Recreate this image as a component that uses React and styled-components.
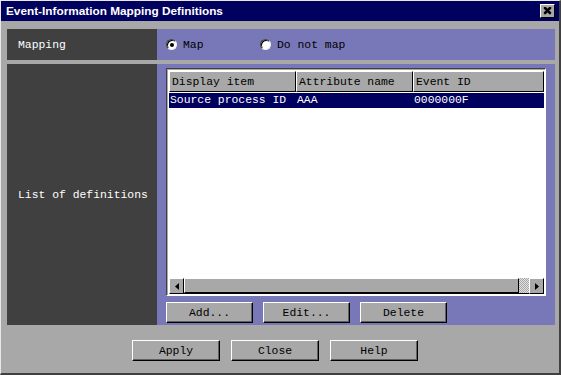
import React, { useState } from 'react';
import styled, { createGlobalStyle } from 'styled-components';

const GlobalStyle = createGlobalStyle`
  html, body { margin: 0; padding: 0; background: #a8a8a8; }
  * { box-sizing: border-box; }
`;

const mono = `"Liberation Mono", "DejaVu Sans Mono", monospace`;

const Window = styled.div`
  width: 561px;
  height: 375px;
  background: #a8a8a8;
  border-left: 1px solid #e8e8e8;
  border-top: 1px solid #e8e8e8;
  border-right: 2px solid #404040;
  border-bottom: 2px solid #404040;
  display: flex;
  flex-direction: column;
  font-family: ${mono};
  font-size: 11.4px;
  overflow: hidden;
`;

const TitleBar = styled.div`
  height: 20px;
  background: #00005e;
  color: #fff;
  display: flex;
  align-items: center;
  justify-content: space-between;
  padding: 0 4px 0 5px;
  font-family: "Liberation Sans", Arial, sans-serif;
  font-weight: bold;
  font-size: 11.8px;
`;

const CloseBox = styled.div`
  width: 15px;
  height: 14px;
  background: #a8a8a8;
  border-top: 1px solid #fff;
  border-left: 1px solid #fff;
  border-right: 1px solid #000;
  border-bottom: 1px solid #000;
  display: flex;
  align-items: center;
  justify-content: center;
`;

const Content = styled.div`
  flex: 1;
  display: flex;
  flex-direction: column;
  gap: 4px;
  padding: 8px 4px 0 6px;
`;

const Row = styled.div`
  display: flex;
  height: ${({ $h }) => $h}px;
`;

const Label = styled.div`
  width: 150px;
  background: #404040;
  color: #fff;
  display: flex;
  align-items: center;
  padding-left: 11px;
`;

const Field = styled.div`
  flex: 1;
  background: #7878b8;
  display: flex;
  flex-direction: ${({ $col }) => ($col ? 'column' : 'row')};
  align-items: ${({ $col }) => ($col ? 'stretch' : 'center')};
  padding: ${({ $col }) => ($col ? '4px 8px 0 9px' : '0 0 0 9px')};
  gap: ${({ $col }) => ($col ? '6px' : '0')};
`;

const RadioOption = styled.label`
  display: flex;
  align-items: center;
  gap: 6px;
  color: #000;
  width: ${({ $w }) => $w}px;
  cursor: default;
`;

const RadioDot = styled.span`
  width: 11px;
  height: 11px;
  border-radius: 50%;
  background: #fff;
  border-top: 1px solid #404040;
  border-left: 1px solid #404040;
  border-right: 1px solid #f0f0f0;
  border-bottom: 1px solid #f0f0f0;
  box-shadow: inset 1px 1px 0 #000;
  display: flex;
  align-items: center;
  justify-content: center;

  &::after {
    content: '';
    width: 4px;
    height: 4px;
    border-radius: 50%;
    background: ${({ $on }) => ($on ? '#000' : 'transparent')};
  }
`;

const ListBox = styled.div`
  height: 228px;
  background: #fff;
  border-top: 1px solid #404040;
  border-left: 1px solid #404040;
  border-right: 1px solid #fff;
  border-bottom: 1px solid #fff;
  box-shadow: inset 1px 1px 0 #a8a8a8;
  padding: 2px 1px 1px 2px;
  display: flex;
  flex-direction: column;
  width: 380px;
`;

const Columns = styled.div`
  display: grid;
  grid-template-columns: 127px 117px 1fr;
`;

const HeaderCell = styled.div`
  height: 21px;
  background: #a8a8a8;
  border-top: 1px solid #fff;
  border-left: 1px solid #fff;
  border-right: 1px solid #000;
  border-bottom: 1px solid #000;
  display: flex;
  align-items: center;
  padding-left: 2px;
  color: #000;
`;

const DataRow = styled(Columns)`
  height: 15px;
  background: ${({ $sel }) => ($sel ? '#00005e' : 'transparent')};
  color: ${({ $sel }) => ($sel ? '#fff' : '#000')};
  margin-top: 1px;
`;

const DataCell = styled.div`
  padding-left: 1px;
  line-height: 15px;
  white-space: nowrap;
`;

const Spacer = styled.div`
  flex: 1;
`;

const ScrollBar = styled.div`
  height: 16px;
  display: flex;
  background: #a8a8a8;
  border-bottom: 1px solid #000;
`;

const ArrowBtn = styled.div`
  width: 15px;
  height: 16px;
  background: #a8a8a8;
  border-top: 1px solid #fff;
  border-left: 1px solid #fff;
  border-right: 1px solid #000;
  border-bottom: 1px solid #000;
  display: flex;
  align-items: center;
  justify-content: center;
`;

const Thumb = styled.div`
  flex: 1;
  background: #a8a8a8;
  border-top: 1px solid #fff;
  border-left: 1px solid #fff;
  border-right: 1px solid #000;
  border-bottom: 1px solid #000;
`;

const Track = styled.div`
  width: 10px;
  background-color: #fff;
  background-image: repeating-conic-gradient(#a8a8a8 0 25%, #e0e0e0 0 50%);
  background-size: 2px 2px;
`;

const ButtonRow = styled.div`
  display: flex;
  gap: ${({ $gap }) => $gap}px;
  padding-left: ${({ $pl }) => $pl || 0}px;
  padding-top: ${({ $pt }) => $pt || 0}px;
`;

const Button = styled.button`
  width: ${({ $w }) => $w || 88}px;
  height: 21px;
  background: #a8a8a8;
  border-top: 1px solid #fff;
  border-left: 1px solid #fff;
  border-right: 1px solid #000;
  border-bottom: 1px solid #000;
  box-shadow: inset -1px -1px 0 #606060;
  font-family: ${mono};
  font-size: 11.4px;
  color: #000;
  padding: 0;
  cursor: default;
`;

const columns = ['Display item', 'Attribute name', 'Event ID'];
const rows = [{ item: 'Source process ID', attr: 'AAA', id: '0000000F' }];

export default function App() {
  const [mapping, setMapping] = useState('map');

  return (
    <>
      <GlobalStyle />
      <Window>
        <TitleBar>
          <span>Event-Information Mapping Definitions</span>
          <CloseBox>
            <svg width="9" height="8" viewBox="0 0 9 8">
              <path d="M1 0 L8 7 M2 0 L8 6 M1 1 L7 7 M8 0 L1 7 M7 0 L1 6 M8 1 L2 7" stroke="#000" strokeWidth="1.2" />
            </svg>
          </CloseBox>
        </TitleBar>
        <Content>
          <Row $h={31}>
            <Label>Mapping</Label>
            <Field>
              <RadioOption $w={94} onClick={() => setMapping('map')}>
                <RadioDot $on={mapping === 'map'} />
                Map
              </RadioOption>
              <RadioOption onClick={() => setMapping('none')}>
                <RadioDot $on={mapping === 'none'} />
                Do not map
              </RadioOption>
            </Field>
          </Row>
          <Row $h={261}>
            <Label>List of definitions</Label>
            <Field $col>
              <ListBox>
                <Columns>
                  {columns.map(c => (
                    <HeaderCell key={c}>{c}</HeaderCell>
                  ))}
                </Columns>
                {rows.map(r => (
                  <DataRow key={r.id} $sel>
                    <DataCell>{r.item}</DataCell>
                    <DataCell>{r.attr}</DataCell>
                    <DataCell>{r.id}</DataCell>
                  </DataRow>
                ))}
                <Spacer />
                <ScrollBar>
                  <ArrowBtn>
                    <svg width="4" height="7" viewBox="0 0 4 7">
                      <path d="M4 0 L0 3.5 L4 7 Z" fill="#000" />
                    </svg>
                  </ArrowBtn>
                  <Thumb />
                  <Track />
                  <ArrowBtn>
                    <svg width="4" height="7" viewBox="0 0 4 7">
                      <path d="M0 0 L4 3.5 L0 7 Z" fill="#000" />
                    </svg>
                  </ArrowBtn>
                </ScrollBar>
              </ListBox>
              <ButtonRow $gap={10}>
                <Button $w={87}>Add...</Button>
                <Button $w={87}>Edit...</Button>
                <Button $w={87}>Delete</Button>
              </ButtonRow>
            </Field>
          </Row>
          <ButtonRow $gap={11} $pl={125} $pt={11}>
            <Button>Apply</Button>
            <Button>Close</Button>
            <Button>Help</Button>
          </ButtonRow>
        </Content>
      </Window>
    </>
  );
}
